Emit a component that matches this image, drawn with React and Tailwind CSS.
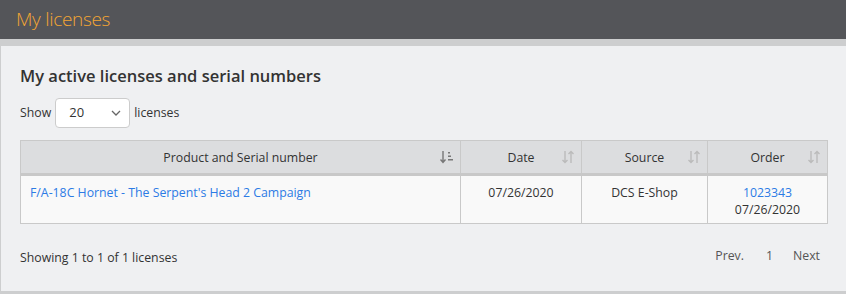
import React from 'react';

function SortIcon({ active }) {
  if (active) {
    return (
      <svg width="14" height="14" viewBox="0 0 14 14" className="text-[#777]">
        <path d="M3 1v11M0.5 9.5L3 12.5L5.5 9.5" stroke="currentColor" strokeWidth="1.4" fill="none" />
        <rect x="8" y="2" width="2" height="1.5" fill="currentColor" />
        <rect x="8" y="5.5" width="3" height="1.5" fill="currentColor" />
        <rect x="8" y="9" width="5" height="1.5" fill="currentColor" />
      </svg>
    );
  }
  return (
    <svg width="14" height="14" viewBox="0 0 14 14" className="text-[#bbb]">
      <path d="M4 1v11.5M1.5 10L4 12.5L6.5 10" stroke="currentColor" strokeWidth="1.4" fill="none" />
      <path d="M10 13V1.5M7.5 4L10 1.5L12.5 4" stroke="currentColor" strokeWidth="1.4" fill="none" />
    </svg>
  );
}

export default function App() {
  const font = { fontFamily: '"Open Sans", "Noto Sans", sans-serif' };

  return (
    <div className="w-[846px] h-[294px] bg-[#cdcecf] text-[#333]" style={font}>
      {/* Header */}
      <div className="h-[39px] bg-[#545559] flex items-center px-4">
        <h1 className="text-[19px] font-light text-[#f3a533] tracking-[-0.3px]">My licenses</h1>
      </div>
      <div className="h-[7px] bg-[#cdcecf]" />

      {/* Panel */}
      <div className="h-[245px] bg-[#eff0f2] border-l border-[#cdcecf] px-[19px] pt-[18px]">
        <h2 className="text-[16.5px] font-semibold text-[#333] leading-[24px]">My active licenses and serial numbers</h2>

        <div className="flex items-center gap-1 mt-[10px] text-[12.3px]">
          <span>Show</span>
          <div className="w-[75px] h-[30px] bg-white border border-[#ccc] rounded-[4px] flex items-center justify-between pl-[13px] pr-[8px]">
            <span className="text-[13px] text-[#333]">20</span>
            <svg width="10" height="6" viewBox="0 0 10 6">
              <path d="M1 1l4 4 4-4" stroke="#666" strokeWidth="1.3" fill="none" />
            </svg>
          </div>
          <span>licenses</span>
        </div>

        {/* Table */}
        <div className="mt-[12px] w-[808px] border border-[#c9c9c9] text-[12.3px]">
          <div className="grid grid-cols-[440px_121px_126px_1fr] bg-[#dcdddf] h-[35px] border-b-[3px] border-[#c8c8c8]">
            <div className="relative flex items-center justify-center pt-[2px] border-r border-[#c9c9c9]">
              <span>Product and Serial number</span>
              <span className="absolute right-[6px] top-[9px]"><SortIcon active /></span>
            </div>
            <div className="relative flex items-center justify-center pt-[2px] border-r border-[#c9c9c9]">
              <span>Date</span>
              <span className="absolute right-[6px] top-[9px]"><SortIcon /></span>
            </div>
            <div className="relative flex items-center justify-center pt-[2px] border-r border-[#c9c9c9]">
              <span>Source</span>
              <span className="absolute right-[6px] top-[9px]"><SortIcon /></span>
            </div>
            <div className="relative flex items-center justify-center pt-[2px]">
              <span>Order</span>
              <span className="absolute right-[6px] top-[9px]"><SortIcon /></span>
            </div>
          </div>
          <div className="grid grid-cols-[440px_121px_126px_1fr] bg-[#f9f9f9] h-[47px] leading-[17px]">
            <div className="border-r border-[#c9c9c9] px-[9px] pt-[8px]">
              <a className="text-[#2c7be5]">F/A-18C Hornet - The Serpent's Head 2 Campaign</a>
            </div>
            <div className="border-r border-[#c9c9c9] text-center pt-[8px]">07/26/2020</div>
            <div className="border-r border-[#c9c9c9] text-center pt-[8px]">DCS E-Shop</div>
            <div className="text-center pt-[8px]">
              <div className="text-[#2c7be5]">1023343</div>
              <div>07/26/2020</div>
            </div>
          </div>
        </div>

        {/* Footer */}
        <div className="flex items-center justify-between mt-[21px] text-[12.3px] w-[808px]">
          <span className="mt-[4px]">Showing 1 to 1 of 1 licenses</span>
          <div className="flex items-center text-[#555] mr-[8px]">
            <span>Prev.</span>
            <span className="ml-[22px] text-[#555]">1</span>
            <span className="ml-[20px]">Next</span>
          </div>
        </div>
      </div>
    </div>
  );
}
